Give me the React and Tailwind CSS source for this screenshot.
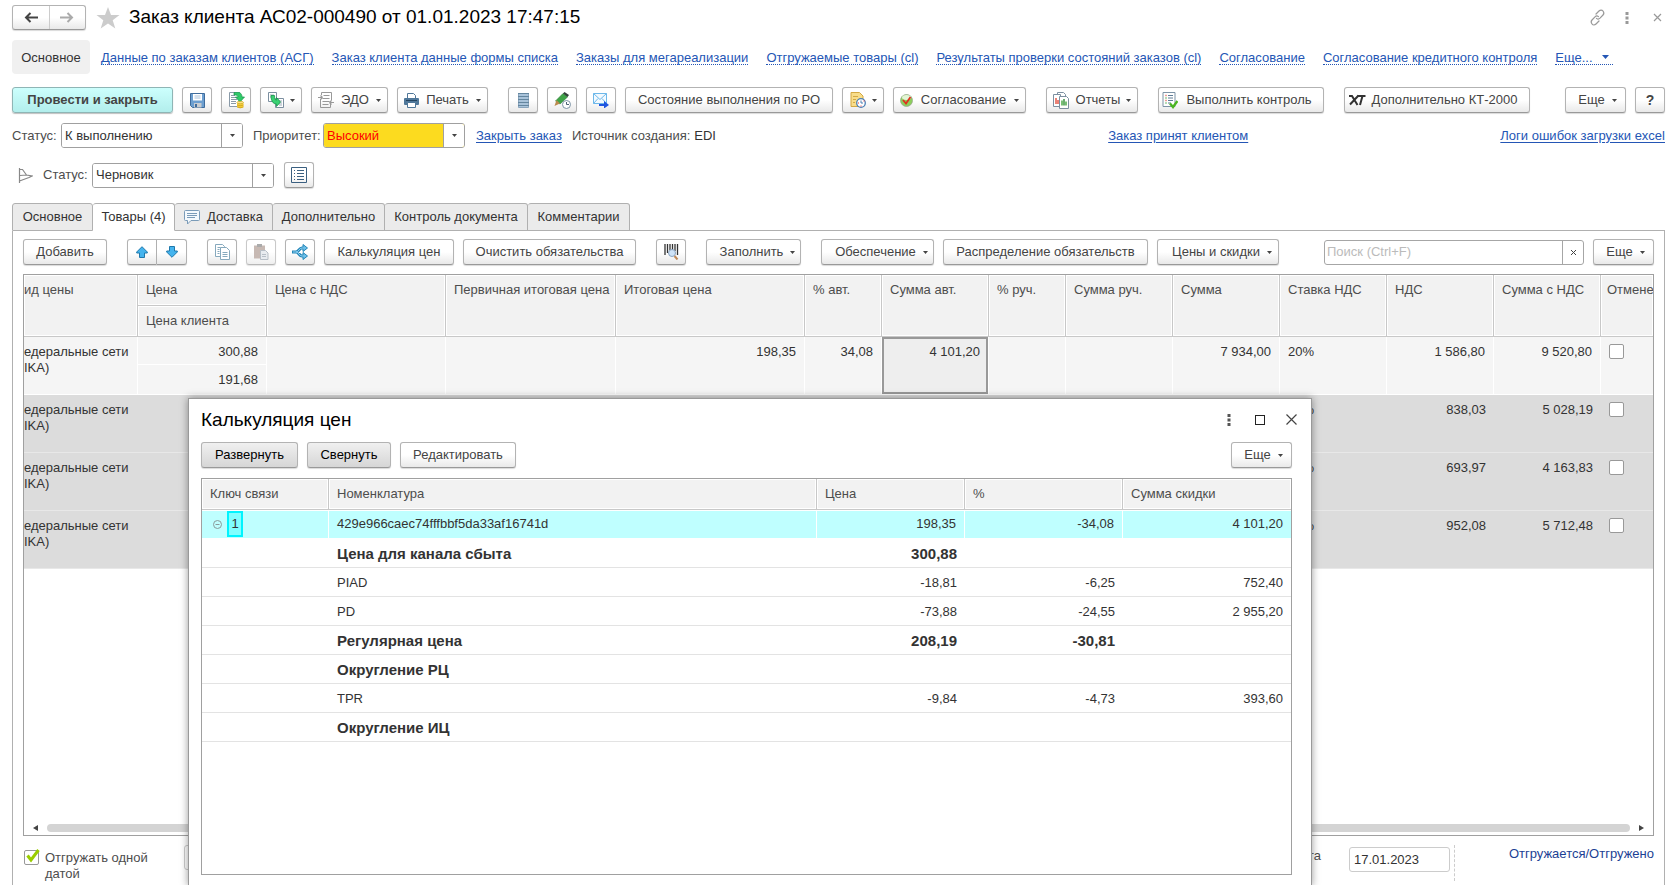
import React, { useState } from 'react';

// общие стили
const BTN_BASE =
  'flex h-[26px] shrink-0 items-center justify-center rounded-[3px] border border-[#b3b3b3] border-b-[#999] shadow-[0_1px_1px_rgba(0,0,0,0.15)] whitespace-nowrap';
const BTN = `${BTN_BASE} bg-linear-to-b from-white from-50% to-[#e9e9e9] text-[#444]`;
const BTN_DARK = `${BTN_BASE} bg-linear-to-b from-[#f0f0f0] to-[#d6d6d6] text-black`;

const navLinks = [
  'Данные по заказам клиентов (АСГ)',
  'Заказ клиента данные формы списка',
  'Заказы для мегареализации',
  'Отгружаемые товары (cl)',
  'Результаты проверки состояний заказов (cl)',
  'Согласование',
  'Согласование кредитного контроля',
];

const rows = [
  { price: '300,88', clientPrice: '191,68', total: '198,35', autoPct: '34,08', autoSum: '4 101,20', sum: '7 934,00', vat: '1 586,80', sumVat: '9 520,80' },
  { price: '', clientPrice: '', total: '', autoPct: '', autoSum: '', sum: '', vat: '838,03', sumVat: '5 028,19' },
  { price: '', clientPrice: '', total: '', autoPct: '', autoSum: '', sum: '', vat: '693,97', sumVat: '4 163,83' },
  { price: '', clientPrice: '', total: '', autoPct: '', autoSum: '', sum: '', vat: '952,08', sumVat: '5 712,48' },
];

const calcRows = [
  { name: 'Цена для канала сбыта', price: '300,88', pct: '', discount: '', bold: true },
  { name: 'PIAD', price: '-18,81', pct: '-6,25', discount: '752,40' },
  { name: 'PD', price: '-73,88', pct: '-24,55', discount: '2 955,20' },
  { name: 'Регулярная цена', price: '208,19', pct: '-30,81', discount: '', bold: true },
  { name: 'Округление РЦ', price: '', pct: '', discount: '', bold: true },
  { name: 'TPR', price: '-9,84', pct: '-4,73', discount: '393,60' },
  { name: 'Округление ИЦ', price: '', pct: '', discount: '', bold: true },
];

export default function App() {
  return (
    <div className="relative flex h-screen flex-col overflow-hidden bg-white px-3 font-['Liberation_Sans',Arial,sans-serif] text-[13px] leading-4 text-[#333]">
      <TitleBar />
      <NavBar />
      <CommandBar />
      <StatusRows />
      <Tabs />
      <section className="flex min-h-0 flex-1 flex-col border-x border-[#b0b0b0] px-[10px] pt-2">
        <GoodsToolbar />
        <GoodsTable />
        <Footer />
      </section>
      <CalcDialog />
    </div>
  );
}

/* === Шапка === */
const TitleBar = () => (
  <header className="flex h-[35px] shrink-0 items-center">
    <div className="flex h-[25px] w-[74px] rounded-[3px] border border-[#b3b3b3] border-b-[#999] bg-linear-to-b from-white from-50% to-[#e9e9e9] shadow-[0_1px_1px_rgba(0,0,0,0.15)]">
      <button aria-label="Назад" className="flex flex-1 items-center justify-center border-r border-[#ccc]">
        <ArrowIcon color="#444" />
      </button>
      <button aria-label="Вперед" className="flex flex-1 items-center justify-center">
        <ArrowIcon color="#aaa" flip />
      </button>
    </div>
    <button aria-label="Избранное" className="ml-[10px]">
      <svg width="24" height="22" viewBox="0 0 24 22" fill="#ccc">
        <path d="M12 0l3 8h8.500l-6.800 5.200 2.600 8.300L12 16.500l-7.300 5 2.600-8.300L.5 8H9z" />
      </svg>
    </button>
    <h1 className="ml-[9px] pb-px text-[19px] leading-6 text-black">Заказ клиента АС02-000490 от 01.01.2023 17:47:15</h1>
    <div className="-mr-[2px] ml-auto flex items-center gap-[10px]">
      <button aria-label="Ссылка" className="flex w-5 justify-center">
        <svg width="17" height="17" viewBox="0 0 17 17" fill="none" stroke="#999" strokeWidth="1.200" strokeLinecap="round">
          <path d="M7 5l3-3c1.300-1.300 3-1.300 4 0s1.200 2.700 0 4l-3 3.200c-1 1-2.500 1-3.500.2M10 12l-3 3c-1.300 1.300-3 1.300-4 0s-1.200-2.700 0-4l3-3.200c1-1 2.500-1 3.500-.2" />
        </svg>
      </button>
      <button aria-label="Меню" className="flex w-5 justify-center"><DotsIcon color="#999" /></button>
      <button aria-label="Закрыть" className="flex w-5 justify-center">
        <svg width="9" height="9" viewBox="0 0 9 9" stroke="#999" strokeWidth="1.200"><path d="M1 1l7 7M8 1L1 8" /></svg>
      </button>
    </div>
  </header>
);

const NavBar = () => (
  <nav className="mt-[5px] flex h-[34px] shrink-0 items-center gap-[18px] whitespace-nowrap">
    <span className="-mr-[7px] flex h-full w-[78px] items-center justify-center rounded-[4px] bg-[#f0f0f0] pt-px">Основное</span>
    {navLinks.map((text) => (
      <a key={text} href="#" className="mt-px border-b border-dotted border-[#2456b5] leading-[13px] text-[#2456b5]">
        {text}
      </a>
    ))}
    <a href="#" className="mt-px flex items-center gap-[9px] border-b border-dotted border-[#2456b5] pr-1 leading-[13px] text-[#2456b5]">
      Еще...
      <Caret className="text-[#2456b5]" big />
    </a>
  </nav>
);

/* === Командная панель === */
const CommandBar = () => (
  <div className="mt-[13px] flex shrink-0 items-center gap-[9px]">
    <button className="h-[26px] w-[161px] shrink-0 rounded-[3px] border border-[#8fb5b5] bg-linear-to-b from-[#ccfffd] to-[#b2eeec] font-bold text-[#444] shadow-[0_1px_1px_rgba(0,0,0,0.25)]">
      Провести и закрыть
    </button>
    <button aria-label="Записать" className={`${BTN} w-[30px]`}><SaveIcon /></button>
    <button aria-label="Движения" className={`${BTN} w-[30px]`}><DocCoinsIcon /></button>
    <button aria-label="Создать на основании" className={`${BTN} w-[42px] gap-[6px]`}><BasedOnIcon /><Caret /></button>
    <button className={`${BTN} w-[77px] gap-[7px]`}><EdoIcon />ЭДО<Caret /></button>
    <button className={`${BTN} w-[91px] gap-[7px]`}><PrinterIcon />Печать<Caret /></button>
    <button aria-label="Список" className={`${BTN} ml-[11px] w-[30px]`}><StackIcon /></button>
    <button aria-label="История изменений" className={`${BTN} w-[30px]`}><PencilClockIcon /></button>
    <button aria-label="Отправить" className={`${BTN} w-[30px]`}><MailIcon /></button>
    <button className={`${BTN} w-[208px]`}>Состояние выполнения по РО</button>
    <button aria-label="Задачи" className={`${BTN} w-[42px] gap-[6px]`}><NoteClockIcon /><Caret /></button>
    <button className={`${BTN} w-[133px] gap-[8px]`}><CheckBallIcon />Согласование<Caret /></button>
    <button className={`${BTN} ml-[11px] w-[92px] gap-[6px]`}><ReportIcon />Отчеты<Caret /></button>
    <button className={`${BTN} ml-[11px] w-[166px] gap-[8px] pr-2`}><ControlIcon />Выполнить контроль</button>
    <button className={`${BTN} ml-[11px] w-[186px] gap-[6px] pr-2`}>
      <KtIcon />Дополнительно КТ-2000
    </button>
    <button className={`${BTN} ml-auto w-[61px] gap-[7px] pl-1`}>Еще<Caret /></button>
    <button className={`${BTN} w-[30px] text-[14px] font-bold`}>?</button>
  </div>
);

const StatusRows = () => (
  <>
    <div className="mt-[10px] flex h-[25px] shrink-0 items-center whitespace-nowrap text-[#4d4d4d]">
      <label htmlFor="status" className="w-[49px]">Статус:</label>
      <Dropdown id="status" value="К выполнению" width="w-[182px]" />
      <label htmlFor="priority" className="ml-[10px] w-[70px]">Приоритет:</label>
      <Dropdown id="priority" value="Высокий" width="w-[142px]" color="bg-[#fcdb1f] text-[#f00]" />
      <a href="#" className="ml-[11px] text-[#2456b5] underline underline-offset-2">Закрыть заказ</a>
      <span className="ml-[10px]">Источник создания:</span>
      <span className="ml-1 text-[#333]">EDI</span>
      <div className="flex-[14]" />
      <a href="#" className="text-[#2456b5] underline underline-offset-2">Заказ принят клиентом</a>
      <div className="flex-[9]" />
      <a href="#" className="text-[#2456b5] underline underline-offset-2">Логи ошибок загрузки excel</a>
    </div>
    <div className="mt-[14px] flex h-[26px] shrink-0 items-center pl-[6px] text-[#4d4d4d]">
      <svg width="15" height="15" viewBox="0 0 15 15" fill="none" stroke="#888" strokeWidth="1.200">
        <path d="M1.500 0v15M1.500 1.500h3l4 5.500 5.500 1-3 1.500-9.500 3.500M2 7.500l6.500-.5" />
      </svg>
      <label htmlFor="state" className="ml-[10px] w-[49px]">Статус:</label>
      <Dropdown id="state" value="Черновик" width="w-[182px]" />
      <button aria-label="Журнал статусов" className={`${BTN} ml-[10px] w-[30px]`}>
        <svg width="16" height="16" viewBox="0 0 16 16" fill="none" stroke="#3a5f80">
          <path d="M.5.5h15v15H.5z" />
          <path d="M3 3.500h1M6 3.500h7M3 6.500h1M6 6.500h7M3 9.500h1M6 9.500h7M3 12.500h1M6 12.500h7" />
        </svg>
      </button>
    </div>
  </>
);

/* === Закладки === */
const Tabs = () => (
  <div role="tablist" className="mt-[15px] flex h-[28px] shrink-0 whitespace-nowrap">
    <Tab width="w-[81px]">Основное</Tab>
    <Tab width="w-[82px]" active>Товары (4)</Tab>
    <Tab width="w-[98px]">
      <svg width="16" height="15" viewBox="0 0 16 15" fill="#f4f9fd" stroke="#7a9bb8">
        <path d="M1.500.5h13q1 0 1 1v8q0 1-1 1H7l-3.500 3.500v-3.500h-2q-1 0-1-1v-8q0-1 1-1z" />
        <path d="M3 3.500h10M3 5.500h10M3 7.500h8" />
      </svg>
      Доставка
    </Tab>
    <Tab width="w-[112px]">Дополнительно</Tab>
    <Tab width="w-[143px]">Контроль документа</Tab>
    <Tab width="w-[102px]">Комментарии</Tab>
    <div className="flex-1 border-b border-[#b0b0b0]" />
  </div>
);

const Tab = ({ width, active, children }) => (
  <button
    role="tab"
    aria-selected={!!active}
    className={`${width} flex items-center justify-center gap-[7px] rounded-t-[3px] border-t border-r border-b border-[#b0b0b0] first:border-l ${
      active ? 'border-b-white bg-white' : 'bg-[#ebebeb]'
    }`}
  >
    {children}
  </button>
);

/* === Товары === */
const GoodsToolbar = () => (
  <div className="flex shrink-0 items-center gap-[9px]">
    <button className={`${BTN} w-[84px]`}>Добавить</button>
    <div className="ml-[11px] flex">
      <button aria-label="Переместить вверх" className={`${BTN} w-[30px] rounded-r-none`}><MoveIcon /></button>
      <button aria-label="Переместить вниз" className={`${BTN} w-[30px] rounded-l-none border-l-0`}><MoveIcon down /></button>
    </div>
    <button aria-label="Копировать" className={`${BTN} ml-[11px] w-[30px]`}>
      <svg width="15" height="16" viewBox="0 0 15 16" fill="#fff" stroke="#86a9bd">
        <path d="M.5 12.500V.5h7l2 2v10z" />
        <path d="M2.500 3.500h3M2.500 5.500h2M2.500 7.500h2M2.500 9.500h2" />
        <path d="M5.500 15.500v-12h6l3 3v9z" />
        <path d="M7.500 8.500h5M7.500 10.500h5M7.500 12.500h5" />
      </svg>
    </button>
    <button aria-label="Вставить" disabled className={`${BTN} w-[30px] opacity-70`}>
      <svg width="15" height="16" viewBox="0 0 15 16">
        <path d="M0 1.500h11v13H0z" fill="#b09c94" />
        <path d="M3 0h5v3H3z" fill="#888" />
        <path d="M6.500 6.500h5l2.500 2.500v6.500H6.500z" fill="#dfe5ea" stroke="#9aa5b0" />
        <path d="M8 10.500h4M8 12.500h4" stroke="#9aa5b0" />
      </svg>
    </button>
    <button aria-label="Разбить строку" className={`${BTN} w-[30px]`}>
      <svg width="16" height="16" viewBox="0 0 16 16" fill="none">
        <path d="M0 8h4c3 0 3-4 6-4h2M4 8c3 0 3 4 6 4h2" stroke="#2486b8" strokeWidth="3" />
        <path d="M11 .5L15.500 4 11 7.500zM11 8.500l4.500 3.500-4.500 3.500z" fill="#6cc0ea" stroke="#2486b8" />
        <path d="M1 8h3c3 0 3-4 6-4h2M4 8c3 0 3 4 6 4h2" stroke="#8dd2f5" />
      </svg>
    </button>
    <button className={`${BTN} w-[130px]`}>Калькуляция цен</button>
    <button className={`${BTN} w-[173px]`}>Очистить обязательства</button>
    <button aria-label="Поиск по штрихкоду" className={`${BTN} ml-[11px] w-[30px]`}>
      <svg width="15" height="16" viewBox="0 0 15 16" fill="none">
        <path d="M1 0v11M3.500 0v9M6 0v6M8.500 0v6M11 0v7M13.500 0v11" stroke="#333" strokeWidth="1.300" />
        <circle cx="8" cy="9" r="3.500" fill="#cfe3f7" stroke="#8aa3bf" />
        <path d="M10.500 12l3 3.500" stroke="#c08a5a" strokeWidth="2" />
      </svg>
    </button>
    <button className={`${BTN} ml-[11px] w-[95px] gap-[7px] pl-2`}>Заполнить<Caret /></button>
    <button className={`${BTN} ml-[11px] w-[113px] gap-[7px] pl-2`}>Обеспечение<Caret /></button>
    <button className={`${BTN} w-[205px]`}>Распределение обязательств</button>
    <button className={`${BTN} w-[122px] gap-[7px] pl-2`}>Цены и скидки<Caret /></button>
    <div className="ml-auto flex h-[25px] w-[260px] rounded-[3px] border border-[#a6a6a6]">
      <input aria-label="Поиск" placeholder="Поиск (Ctrl+F)" className="min-w-0 flex-1 px-[2px] outline-none placeholder:text-[#bbb]" />
      <button aria-label="Очистить поиск" className="flex w-[21px] items-center justify-center border-l border-[#a6a6a6]">
        <svg width="5" height="5" viewBox="0 0 5 5" stroke="#444"><path d="M0 0l5 5M5 0L0 5" /></svg>
      </button>
    </div>
    <button className={`${BTN} w-[61px] gap-[7px] pl-1`}>Еще<Caret /></button>
  </div>
);

const TH = 'border-r border-b border-[#c8c8c8] bg-[#f2f2f2] px-2 pt-[7px] text-left align-top font-normal text-[#4d4d4d] shadow-[inset_0_0_0_1px_white] whitespace-nowrap';

const GoodsTable = () => (
  <div className="mt-[9px] flex min-h-0 flex-1 flex-col overflow-hidden border border-[#a0a0a0]">
    <table className="w-full table-fixed border-separate border-spacing-0">
      <colgroup>
        <col className="w-[114px]" />
        <col className="w-[129px]" />
        <col className="w-[179px]" />
        <col className="w-[170px]" />
        <col />
        <col className="w-[77px]" />
        <col className="w-[107px]" />
        <col className="w-[77px]" />
        <col className="w-[107px]" />
        <col className="w-[107px]" />
        <col className="w-[107px]" />
        <col className="w-[107px]" />
        <col className="w-[107px]" />
        <col className="w-[52px]" />
      </colgroup>
      <thead>
        <tr className="h-[31px]">
          <th rowSpan={2} className={`${TH} pl-0`}>ид цены</th>
          <th className={TH}>Цена</th>
          <th rowSpan={2} className={TH}>Цена с НДС</th>
          <th rowSpan={2} className={TH}>Первичная итоговая цена</th>
          <th rowSpan={2} className={TH}>Итоговая цена</th>
          <th rowSpan={2} className={TH}>% авт.</th>
          <th rowSpan={2} className={TH}>Сумма авт.</th>
          <th rowSpan={2} className={TH}>% руч.</th>
          <th rowSpan={2} className={TH}>Сумма руч.</th>
          <th rowSpan={2} className={TH}>Сумма</th>
          <th rowSpan={2} className={TH}>Ставка НДС</th>
          <th rowSpan={2} className={TH}>НДС</th>
          <th rowSpan={2} className={TH}>Сумма с НДС</th>
          <th rowSpan={2} className={`${TH} border-r-0 pr-0 pl-[6px]`}>Отмене</th>
        </tr>
        <tr className="h-[31px]">
          <th className={TH}>Цена клиента</th>
        </tr>
      </thead>
      <tbody>
        {rows.map((row, i) => (
          <GoodsRow key={i} row={row} first={i === 0} />
        ))}
      </tbody>
    </table>
    <div className="mt-auto mb-[3px] flex h-2 items-center px-[9px]">
      <svg width="5" height="6" viewBox="0 0 5 6" fill="#444"><path d="M5 0v6L0 3z" /></svg>
      <div className="mr-[9px] ml-[9px] h-2 flex-1 rounded-full bg-[#d4d4d4]" />
      <svg width="5" height="6" viewBox="0 0 5 6" fill="#444"><path d="M0 0v6l5-3z" /></svg>
    </div>
  </div>
);

const GoodsRow = ({ row, first }) => {
  const cell = `border-b align-top ${first ? 'border-r border-white bg-[#f5f5f5]' : 'border-[#e8e8e8] bg-[#dcdcdc]'}`;
  const num = `${cell} px-2 pt-[7px] text-right`;
  return (
    <tr className="h-[58px]">
      <td className={`${cell} pt-[7px] text-left whitespace-nowrap`}>едеральные сети<br />IKA)</td>
      <td className={cell}>
        {first && (
          <>
            <div className="h-[28px] border-b border-white px-2 pt-[7px] text-right">{row.price}</div>
            <div className="px-2 pt-[7px] text-right">{row.clientPrice}</div>
          </>
        )}
      </td>
      <td className={cell} />
      <td className={cell} />
      <td className={num}>{row.total}</td>
      <td className={num}>{row.autoPct}</td>
      {first ? (
        <td className="border-r border-b border-white bg-[#eee] px-2 pt-[7px] text-right align-top shadow-[inset_0_0_0_2px_#999]">{row.autoSum}</td>
      ) : (
        <td className={cell} />
      )}
      <td className={cell} />
      <td className={cell} />
      <td className={num}>{row.sum}</td>
      <td className={`${cell} px-2 pt-[7px] text-left`}>20%</td>
      <td className={num}>{row.vat}</td>
      <td className={num}>{row.sumVat}</td>
      <td className={`${cell} border-r-0 px-2 pt-[7px]`}>
        <input type="checkbox" aria-label="Отменено" className="block size-[15px] appearance-none rounded-[2px] border border-[#999] bg-white" />
      </td>
    </tr>
  );
};

const Footer = () => {
  const [oneDate, setOneDate] = useState(true);
  return (
    <div className="flex h-[49px] shrink-0 items-start pt-[9px] text-[#4d4d4d]">
      <label className="flex w-[150px] gap-[6px] pt-[5px] pl-px">
        <span className="relative size-[15px] shrink-0">
          <input
            type="checkbox"
            checked={oneDate}
            onChange={() => setOneDate(!oneDate)}
            className="block size-[15px] appearance-none rounded-[2px] border border-[#999] bg-white"
          />
          {oneDate && (
            <svg className="pointer-events-none absolute -top-px left-[2px]" width="14" height="14" viewBox="0 0 14 14" fill="none" stroke="#9acd00" strokeWidth="3">
              <path d="M1.500 6.500l3.500 4.500 7.500-10" />
            </svg>
          )}
        </span>
        <span className="w-[105px]">Отгружать одной датой</span>
      </label>
      <input aria-label="Дата отгрузки" className="ml-[11px] h-[25px] w-[120px] rounded-[3px] border border-[#ccc]" />
      <label htmlFor="docDate" className="ml-auto pt-[3px]">Дата</label>
      <input id="docDate" defaultValue="17.01.2023" className="mt-[2px] ml-[28px] h-[25px] w-[101px] rounded-[3px] border border-[#ccc] px-1 text-[#333]" />
      <div className="ml-1 h-[36px] border-l border-dashed border-[#ccc]" />
      <a href="#" className="w-[199px] pt-px text-right text-[#1c3f94]">Отгружается/Отгружено</a>
    </div>
  );
};

/* === Окно калькуляции === */
const CTH = 'h-[31px] border-r border-b border-[#c8c8c8] bg-[#f2f2f2] px-2 text-left font-normal text-[#4d4d4d] shadow-[inset_0_0_0_1px_white] last:border-r-0';
const SEL = 'border-r border-b border-white bg-[#bfffff] px-2 last:border-r-0 shadow-[inset_0_1px_0_white]';
const CTD = 'border-b border-[#e3e3e3] px-2 pt-[2px]';

const CalcDialog = () => (
  <div
    role="dialog"
    aria-label="Калькуляция цен"
    className="absolute top-[398px] right-[365px] -bottom-px left-[188px] flex flex-col border border-[#999] bg-white pr-[19px] pl-3 shadow-[0_0_8px_rgba(0,0,0,0.4)]"
  >
    <div className="flex h-[43px] shrink-0 items-center pb-[2px]">
      <h2 className="text-[19px] leading-6 text-black">Калькуляция цен</h2>
      <div className="-mr-[9px] ml-auto flex items-center gap-[11px]">
        <button aria-label="Меню" className="flex w-5 justify-center"><DotsIcon color="#555" /></button>
        <button aria-label="Развернуть окно" className="flex w-5 justify-center">
          <span className="block size-[10px] border border-[#222]" />
        </button>
        <button aria-label="Закрыть окно" className="flex w-5 justify-center">
          <svg width="11" height="11" viewBox="0 0 11 11" stroke="#444" strokeWidth="1.200"><path d="M.5.5l10 10M10.500.5l-10 10" /></svg>
        </button>
      </div>
    </div>
    <div className="flex shrink-0 items-center gap-[9px]">
      <button className={`${BTN_DARK} w-[97px]`}>Развернуть</button>
      <button className={`${BTN_DARK} w-[84px]`}>Свернуть</button>
      <button className={`${BTN} w-[116px]`}>Редактировать</button>
      <button className={`${BTN} ml-auto w-[61px] gap-[7px] pl-1`}>Еще<Caret /></button>
    </div>
    <div className="mt-[10px] mb-[10px] flex-1 overflow-hidden border border-[#a0a0a0]">
      <table className="w-full table-fixed border-separate border-spacing-0">
        <colgroup>
          <col className="w-[127px]" />
          <col />
          <col className="w-[148px]" />
          <col className="w-[158px]" />
          <col className="w-[168px]" />
        </colgroup>
        <thead>
          <tr>
            <th className={CTH}>Ключ связи</th>
            <th className={CTH}>Номенклатура</th>
            <th className={CTH}>Цена</th>
            <th className={CTH}>%</th>
            <th className={CTH}>Сумма скидки</th>
          </tr>
        </thead>
        <tbody>
          <tr className="h-[29px]">
            <td className={SEL}>
              <div className="flex items-center gap-[5px] pl-[3px]">
                <button aria-label="Свернуть группу">
                  <svg width="9" height="9" viewBox="0 0 9 9" fill="none" stroke="#8a9a9a"><circle cx="4.500" cy="4.500" r="4" /><path d="M2.500 4.500h4" /></svg>
                </button>
                <span className="flex h-[26px] w-4 items-center justify-center border-2 border-[#00f4ff] bg-[#80ffff]">1</span>
              </div>
            </td>
            <td className={SEL}>429e966caec74fffbbf5da33af16741d</td>
            <td className={`${SEL} text-right`}>198,35</td>
            <td className={`${SEL} text-right`}>-34,08</td>
            <td className={`${SEL} text-right`}>4 101,20</td>
          </tr>
          {calcRows.map((row) => (
            <tr key={row.name} className={`h-[29px] ${row.bold ? 'text-[15px] font-bold' : ''}`}>
              <td className={CTD} />
              <td className={CTD}>{row.name}</td>
              <td className={`${CTD} text-right`}>{row.price}</td>
              <td className={`${CTD} text-right`}>{row.pct}</td>
              <td className={`${CTD} text-right`}>{row.discount}</td>
            </tr>
          ))}
        </tbody>
      </table>
    </div>
  </div>
);

/* === Общие элементы === */
const Dropdown = ({ id, value, width, color = 'bg-white text-[#333]' }) => (
  <div className={`${width} relative h-[25px] shrink-0 rounded-[3px] border border-[#a0a0a0]`}>
    <select id={id} defaultValue={value} className={`${color} block h-full w-full appearance-none rounded-[2px] pr-6 pl-[3px] outline-none`}>
      <option>{value}</option>
    </select>
    <span className="pointer-events-none absolute inset-y-0 right-0 flex w-[21px] items-center justify-center rounded-r-[2px] border-l border-[#a0a0a0] bg-white">
      <Caret />
    </span>
  </div>
);

const Caret = ({ big, className = 'text-[#444]' }) => (
  <svg className={`${className} shrink-0`} width={big ? 7 : 5} height={big ? 4 : 3} viewBox="0 0 6 3" preserveAspectRatio="none" fill="currentColor">
    <path d="M0 0h6L3 3z" />
  </svg>
);

const DotsIcon = ({ color }) => (
  <svg width="4" height="12" viewBox="0 0 4 12" fill={color}>
    <path d="M.5 0h3v3h-3zM.5 4.500h3v3h-3zM.5 9h3v3h-3z" />
  </svg>
);

const ArrowIcon = ({ color, flip }) => (
  <svg width="14" height="11" viewBox="0 0 14 11" fill="none" stroke={color} strokeWidth="2" className={flip ? 'rotate-180' : ''}>
    <path d="M14 5.500H2M6.500 1L2 5.500 6.500 10" />
  </svg>
);

const MoveIcon = ({ down }) => (
  <svg width="12" height="12" viewBox="0 0 12 12" fill="#45b4ee" stroke="#1f78ab" className={down ? 'rotate-180' : ''}>
    <path d="M6 .7l5.300 5.300v1H8.500v4.500h-5V7H.7V6z" />
  </svg>
);

const SaveIcon = () => (
  <svg width="15" height="15" viewBox="0 0 15 15">
    <path d="M.5.5h14v14h-12l-2-2z" fill="#6d9fd0" stroke="#3f6c9c" />
    <path d="M3 1h9v6.500H3z" fill="#fff" />
    <path d="M4.500 3h6M4.500 5h6" stroke="#a9c0d8" />
    <path d="M4 10h7.500v4.500H4z" fill="#c9ccd0" />
    <path d="M5 11h2v3H5z" fill="#3f6c9c" />
  </svg>
);

const DocCoinsIcon = () => (
  <svg width="17" height="17" viewBox="0 0 17 17">
    <path d="M1.500.5h10v14h-10z" fill="#fff" stroke="#8a9aa8" />
    <path d="M3 3.500h4M3 5.500h5M3 7.500h6M3 9.500h5M3 11.500h5" stroke="#8a9aa8" />
    <path d="M6 .7c5-1.500 8 .3 8 4.300h2.500L12 10 7.500 5H10c0-1.500-1-2.300-4-2z" fill="#2fc968" stroke="#159447" strokeWidth=".7" />
    <path d="M9 10.500h6.500V15q-3 2.500-6.500 0z" fill="#f5cf3e" />
    <ellipse cx="12.200" cy="10.500" rx="3.300" ry="1.200" fill="#fbe58a" stroke="#c79a12" strokeWidth=".6" />
    <path d="M9 13q3 1.500 6.500 0M9 15q3 1.500 6.500 0" stroke="#c79a12" strokeWidth=".7" fill="none" />
  </svg>
);

const BasedOnIcon = () => (
  <svg width="16" height="16" viewBox="0 0 16 16">
    <path d="M.5.5h8v9h-8z" fill="#fff" stroke="#7c8fa0" />
    <path d="M2 3h4M2 5h3" stroke="#9aa9b6" />
    <path d="M7.500 6.500h8v9h-8z" fill="#fff" stroke="#7c8fa0" />
    <path d="M11 9h3M11 11h3M11 13h3" stroke="#9aa9b6" />
    <path d="M3 3.500h3.500c0 3 .5 4.500 2 4.700V5.500l4 4.500-4 4.500V12C5 12 3 9 3 3.500z" fill="#3ad173" stroke="#149447" strokeWidth=".8" />
  </svg>
);

const EdoIcon = () => (
  <svg width="16" height="16" viewBox="0 0 16 16" fill="none" stroke="#999">
    <path d="M3.500 3V.5h10v8M12.500 12v3.500h-10V7" />
    <path d="M5.500 3.500h6M4.500 6.500h7M4.500 9.500h7M4.500 12.500h6" />
    <path d="M0 5.500h4M4.500 5.500l-2-2M4.500 5.500l-2 2M16 10.500h-4M11.500 10.500l2-2M11.500 10.500l2 2" strokeWidth="1.200" />
  </svg>
);

const PrinterIcon = () => (
  <svg width="15" height="15" viewBox="0 0 15 15">
    <path d="M3.500.5h6l2 2V6h-8z" fill="#fff" stroke="#4f7799" />
    <path d="M1 5h13q1 0 1 1v5q0 1-1 1H1q-1 0-1-1V6q0-1 1-1z" fill="#4f7799" />
    <path d="M2 7.500h11" stroke="#23435f" />
    <path d="M3.500 9.500h8v5h-8z" fill="#fff" stroke="#4f7799" />
  </svg>
);

const StackIcon = () => (
  <svg width="11" height="15" viewBox="0 0 11 15">
    <path d="M.5.5h10v14H.5z" fill="#a9c3da" stroke="#8aa5bd" />
    <path d="M0 .5h11M0 3.500h11M0 6.500h11M0 9.500h11M0 12.500h11" stroke="#64869f" />
  </svg>
);

const PencilClockIcon = () => (
  <svg width="17" height="17" viewBox="0 0 17 17">
    <path d="M9 1.500L13.500 5 6 12l-4.500-3z" fill="#3fa447" stroke="#2a7a33" strokeWidth=".6" />
    <path d="M9 1.500L10.500 0 15 3l-1.500 2z" fill="#33423a" />
    <path d="M2.500 8L6 11.500.5 14z" fill="#b98a4e" />
    <circle cx="12.500" cy="12.500" r="4" fill="#fff" stroke="#7d93a6" />
    <path d="M12.500 10v2.500h2.500" fill="none" stroke="#4a6076" />
  </svg>
);

const MailIcon = () => (
  <svg width="16" height="16" viewBox="0 0 16 16" fill="none">
    <path d="M.5 1.500h13v10H.5z" fill="#f3faff" stroke="#6db8ea" />
    <path d="M.5 1.500L7 7.500l6.500-6M.5 11.500l4.500-5M13.500 11.500l-4.500-5" stroke="#6db8ea" />
    <path d="M6 12h5V9l5 4-5 3.500V14H6z" fill="#1f56e0" />
  </svg>
);

const NoteClockIcon = () => (
  <svg width="16" height="16" viewBox="0 0 16 16">
    <path d="M1 .5h8.500L13 4v10.500H1z" fill="#f8dd8a" stroke="#d3a843" />
    <path d="M3 4.500h5M3 7.500h3M3 10.500h2" stroke="#d3a843" />
    <circle cx="11" cy="11" r="4.300" fill="#fff" stroke="#4b7fb5" strokeWidth="1.300" />
    <path d="M11 8.500V11h2" stroke="#4b7fb5" fill="none" />
    <path d="M8 11h1M10.500 14h1M13.500 9h1" stroke="#e33" />
  </svg>
);

const CheckBallIcon = () => (
  <svg width="13" height="13" viewBox="0 0 13 13" fill="none">
    <circle cx="6.500" cy="6.500" r="6" fill="#8ccf5c" stroke="#9aa88f" strokeWidth=".8" />
    <ellipse cx="6.500" cy="3.500" rx="4.500" ry="2.500" fill="#e3f5d6" />
    <path d="M3 6l3 3.500L10.500 3" stroke="#e0301e" strokeWidth="1.800" />
  </svg>
);

const ReportIcon = () => (
  <svg width="17" height="17" viewBox="0 0 17 17" fill="none">
    <path d="M4.500 2.500V.5h6l2 2v2" fill="#fff" stroke="#7c8fa0" />
    <path d="M.5 2.500h7v12h-7z" fill="#fff" stroke="#7c8fa0" />
    <path d="M3 6v6M5 8v4" stroke="#e0402e" strokeWidth="1.300" />
    <path d="M6.500 4.500h7l2 2v10h-9z" fill="#fff" stroke="#7c8fa0" />
    <path d="M9 8.500v5M13 9.500v4" stroke="#3da53a" strokeWidth="1.400" />
    <path d="M11 7v6.500" stroke="#2f8a35" strokeWidth="1.400" />
  </svg>
);

const ControlIcon = () => (
  <svg width="16" height="17" viewBox="0 0 16 17" fill="none">
    <path d="M1 .5h12v14H1z" fill="#fff" stroke="#7d93a6" />
    <path d="M3.500 3.500h1M3.500 8.500h1" stroke="#e0402e" strokeWidth="1.400" />
    <path d="M3.500 6h1M3.500 11h1" stroke="#3da53a" strokeWidth="1.400" />
    <path d="M6 3.500h5M6 6h5M6 8.500h5M6 11h3" stroke="#5f7c96" />
    <path d="M8 11.500l3 3.500L15.500 9" stroke="#4bb522" strokeWidth="2.400" />
  </svg>
);

const KtIcon = () => (
  <svg width="17" height="12" viewBox="0 0 17 12" fill="none" stroke="#333" strokeWidth="2">
    <path d="M0 2h3l5.500 9M1 10.500L9.500 1.500" />
    <path d="M8.500 2h8M13.500 2l-2.500 9" />
  </svg>
);
